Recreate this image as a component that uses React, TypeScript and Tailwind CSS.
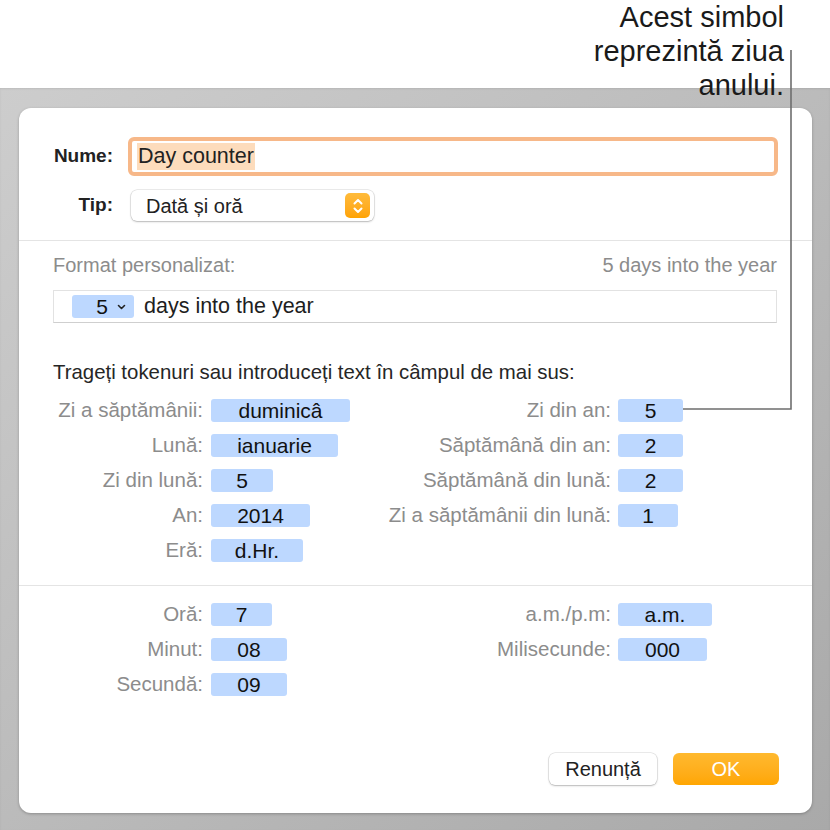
import React from 'react';

type Field = { label: string; value: string; w: string };

const dateLeft: Field[] = [
  { label: 'Zi a săptămânii:', value: 'duminicâ', w: 'w-[139px]' },
  { label: 'Lună:', value: 'ianuarie', w: 'w-[127px]' },
  { label: 'Zi din lună:', value: '5', w: 'w-[62px]' },
  { label: 'An:', value: '2014', w: 'w-[99px]' },
  { label: 'Eră:', value: 'd.Hr.', w: 'w-[92px]' },
];

const dateRight: Field[] = [
  { label: 'Zi din an:', value: '5', w: 'w-[65px]' },
  { label: 'Săptămână din an:', value: '2', w: 'w-[65px]' },
  { label: 'Săptămână din lună:', value: '2', w: 'w-[65px]' },
  { label: 'Zi a săptămânii din lună:', value: '1', w: 'w-[60px]' },
];

const timeLeft: Field[] = [
  { label: 'Oră:', value: '7', w: 'w-[61px]' },
  { label: 'Minut:', value: '08', w: 'w-[76px]' },
  { label: 'Secundă:', value: '09', w: 'w-[76px]' },
];

const timeRight: Field[] = [
  { label: 'a.m./p.m:', value: 'a.m.', w: 'w-[94px]' },
  { label: 'Milisecunde:', value: '000', w: 'w-[89px]' },
];

const Token = ({ value, w }: { value: string; w: string }) => (
  <span className={`${w} h-[23px] rounded-[3px] bg-[#bdd8ff] flex items-center justify-center text-[21px] text-[#111]`}>
    {value}
  </span>
);

// 4-column grid: label | token | label | token
const TokenGrid = ({ left, right }: { left: Field[]; right: Field[] }) => {
  const rows = Math.max(left.length, right.length);
  return (
    <div className="grid grid-cols-[150px_177px_231px_1fr] auto-rows-[35px] items-center">
      {Array.from({ length: rows }).map((_, i) => (
        <React.Fragment key={i}>
          <span className="text-right text-[20.5px] text-[#8c8c8c] whitespace-nowrap">{left[i]?.label}</span>
          <div className="pl-2">{left[i] && <Token value={left[i].value} w={left[i].w} />}</div>
          <span className="text-right text-[20.5px] text-[#8c8c8c] whitespace-nowrap">{right[i]?.label}</span>
          <div className="pl-[7px]">{right[i] && <Token value={right[i].value} w={right[i].w} />}</div>
        </React.Fragment>
      ))}
    </div>
  );
};

export default function App() {
  return (
    <div className="relative w-[830px] h-[830px] overflow-hidden font-['Liberation_Sans',Arial,sans-serif] text-[#1e1e1e]">
      {/* white strip above */}
      <div className="h-[88px] bg-white" />

      {/* gray backdrop */}
      <div className="h-[742px] bg-gradient-to-br from-[#cdcdcd] to-[#a9a9a9] pt-5 pl-[19px] shadow-[inset_0_1px_2px_rgba(0,0,0,0.08)]">
        <div className="w-[793px] h-[705px] bg-white rounded-[12px] shadow-[0_1px_3px_rgba(0,0,0,0.25)] flex flex-col">
          {/* name / type */}
          <div className="pt-[29px] pb-[19px] pl-[34px] pr-[34px] flex flex-col gap-[14px]">
            <div className="flex items-center">
              <span className="w-[60px] text-right text-[19px] font-bold text-[#222]">Nume:</span>
              <div className="ml-[15px] flex-1 h-[39px] rounded-[6px] border-[4px] border-[#f7b889] bg-white flex items-center pl-[5px]">
                <span className="bg-[#fddcbc] h-[27px] flex items-center px-[1px] text-[21.5px] text-[#222]">Day counter</span>
              </div>
            </div>
            <div className="flex items-center">
              <span className="w-[60px] text-right text-[19px] font-bold text-[#222]">Tip:</span>
              <div className="ml-[18px] w-[243px] h-[31px] rounded-[6px] bg-white shadow-[0_0_0_0.5px_rgba(0,0,0,0.15),0_1px_2px_rgba(0,0,0,0.22)] flex items-center justify-between pl-[15px] pr-[4px]">
                <span className="text-[20px] text-[#222]">Dată și oră</span>
                <span className="w-[25px] h-[25px] rounded-[5px] bg-gradient-to-b from-[#ffbb3a] to-[#ffa300] flex items-center justify-center">
                  <svg width="12" height="18" viewBox="0 0 12 18" fill="none" stroke="white" strokeWidth="2" strokeLinecap="round" strokeLinejoin="round">
                    <polyline points="2.5,6.5 6,3 9.5,6.5" />
                    <polyline points="2.5,11.5 6,15 9.5,11.5" />
                  </svg>
                </span>
              </div>
            </div>
          </div>

          <div className="h-px bg-[#e4e4e4]" />

          {/* custom format */}
          <div className="pt-3 pl-[34px] pr-[35px] pb-[17px] flex flex-col">
            <div className="flex justify-between leading-6 text-[20px] text-[#8c8c8c]">
              <span>Format personalizat:</span>
              <span>5 days into the year</span>
            </div>
            <div className="mt-[13px] h-[33px] border border-[#e2e2e2] border-b-[#cfcfcf] flex items-center pl-[18px]">
              <span className="w-[62px] h-[23px] rounded-[3px] bg-[#bdd8ff] flex items-center justify-end gap-[9px] pr-[8px] text-[21px] text-[#111]">
                5
                <svg width="9" height="6" viewBox="0 0 9 6" fill="none" stroke="#222" strokeWidth="1.6" strokeLinecap="round" strokeLinejoin="round">
                  <polyline points="1.5,1.5 4.5,4.5 7.5,1.5" />
                </svg>
              </span>
              <span className="ml-[10px] text-[21.5px] text-[#1e1e1e]">days into the year</span>
            </div>
            <p className="mt-[37px] leading-6 text-[20.4px] text-[#262626]">
              Trageți tokenuri sau introduceți text în câmpul de mai sus:
            </p>
            <div className="mt-[9px]">
              <TokenGrid left={dateLeft} right={dateRight} />
            </div>
          </div>

          <div className="h-px bg-[#e4e4e4]" />

          {/* time */}
          <div className="pt-[11px] pl-[34px] pr-[35px] flex flex-col">
            <TokenGrid left={timeLeft} right={timeRight} />
            <div className="mt-[51px] flex justify-end gap-4 mr-[-2px]">
              <button className="w-[108px] h-[32px] rounded-[6px] bg-white shadow-[0_0_0_0.5px_rgba(0,0,0,0.15),0_1px_2px_rgba(0,0,0,0.22)] text-[20px] text-[#222]">
                Renunță
              </button>
              <button className="w-[106px] h-[32px] rounded-[6px] bg-gradient-to-b from-[#ffb92e] to-[#ffa600] text-[20px] text-white">
                OK
              </button>
            </div>
          </div>
        </div>
      </div>

      {/* callout */}
      <div className="absolute top-0 right-[46px] text-right text-[29px] leading-[34px] text-[#1a1a1a]">
        <div>Acest simbol</div>
        <div>reprezintă ziua</div>
        <div>anului.</div>
      </div>
      <svg className="absolute inset-0 pointer-events-none" width="830" height="830">
        <polyline points="791,50 791,409 683,409" fill="none" stroke="#6e6e6e" strokeWidth="1.6" />
      </svg>
    </div>
  );
}
